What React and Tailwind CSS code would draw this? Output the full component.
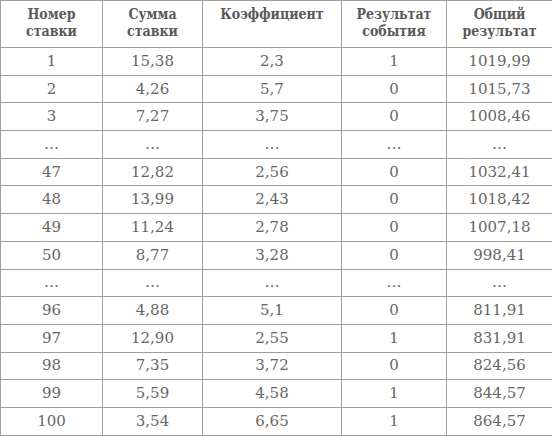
import React from 'react';

const rows = [
  ['1', '15,38', '2,3', '1', '1019,99'],
  ['2', '4,26', '5,7', '0', '1015,73'],
  ['3', '7,27', '3,75', '0', '1008,46'],
  ['…', '…', '…', '…', '…'],
  ['47', '12,82', '2,56', '0', '1032,41'],
  ['48', '13,99', '2,43', '0', '1018,42'],
  ['49', '11,24', '2,78', '0', '1007,18'],
  ['50', '8,77', '3,28', '0', '998,41'],
  ['…', '…', '…', '…', '…'],
  ['96', '4,88', '5,1', '0', '811,91'],
  ['97', '12,90', '2,55', '1', '831,91'],
  ['98', '7,35', '3,72', '0', '824,56'],
  ['99', '5,59', '4,58', '1', '844,57'],
  ['100', '3,54', '6,65', '1', '864,57'],
];

const headers = [
  ['Номер', 'ставки'],
  ['Сумма', 'ставки'],
  ['Коэффициент'],
  ['Результат', 'события'],
  ['Общий', 'результат'],
];

const widths = ['w-[102px]', 'w-[100px]', 'w-[139px]', 'w-[105px]', 'w-[106px]'];

export default function App() {
  return (
    <div className="w-[552px] h-[436px] bg-white font-['DejaVu_Serif',serif]">
      <table className="w-[552px] table-fixed border-collapse text-[#666]">
        <colgroup>
          {widths.map((w, i) => <col key={i} className={w} />)}
        </colgroup>
        <thead>
          <tr>
            {headers.map((h, i) => (
              <th
                key={i}
                className="h-[47px] border border-[#9e9e9e] align-top pt-[5px] font-['DejaVu_Serif_Condensed','DejaVu_Serif',serif] text-[14px] leading-[17px] font-bold text-[#5a5a5a]"
              >
                {h.map((line, j) => <div key={j}>{line}</div>)}
              </th>
            ))}
          </tr>
        </thead>
        <tbody>
          {rows.map((r, i) => (
            <tr key={i}>
              {r.map((c, j) => (
                <td
                  key={j}
                  className="h-[27.7px] border border-[#9e9e9e] p-0 text-center align-middle text-[15px] leading-none"
                >
                  {c}
                </td>
              ))}
            </tr>
          ))}
        </tbody>
      </table>
    </div>
  );
}
